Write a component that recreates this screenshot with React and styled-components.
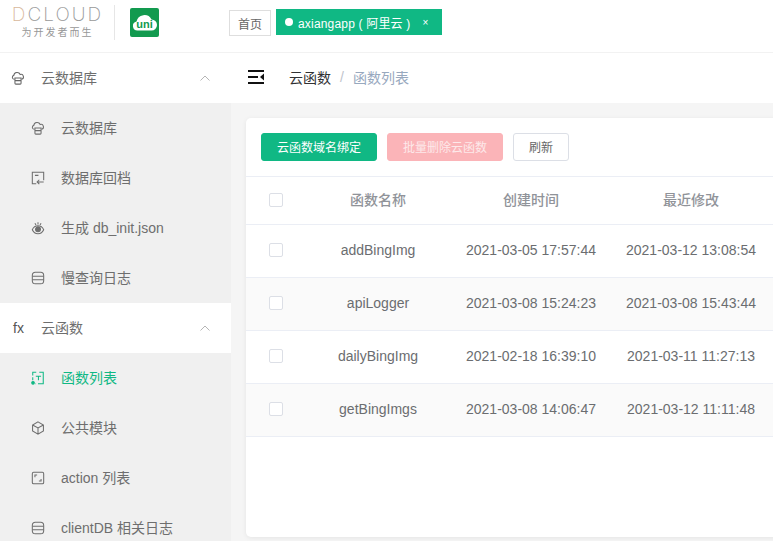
import React from "react";
import styled, { createGlobalStyle } from "styled-components";

const GlobalStyle = createGlobalStyle`
  html, body {
    margin: 0;
    height: 100%;
    overflow: hidden;
    background: #fff;
    font-family: "Liberation Sans", "Noto Sans CJK SC", sans-serif;
    font-size: 14px;
  }
  * { box-sizing: border-box; }
`;

const Page = styled.div`
  width: 773px;
  height: 541px;
  display: flex;
  flex-direction: column;
  overflow: hidden;
`;

const Header = styled.header`
  height: 53px;
  flex: none;
  display: flex;
  align-items: flex-start;
  background: #fff;
  border-bottom: 1px solid #f2f2f2;
`;

const Brand = styled.div`
  width: 229px;
  flex: none;
  display: flex;
  align-items: flex-start;
  padding: 5px 0 0 12px;
`;

const Wordmark = styled.div`
  width: 89px;
  display: flex;
  flex-direction: column;
  align-items: center;
`;

const WordmarkTitle = styled.div`
  font-family: Inter, "Liberation Sans", sans-serif;
  font-weight: 200;
  font-size: 19px;
  line-height: 19px;
  letter-spacing: 2px;
  margin-right: -2px;
  color: #999;
  white-space: nowrap;
`;

const WordmarkAccent = styled.span`
  color: #d8b89c;
`;

const Slogan = styled.div`
  font-size: 10px;
  line-height: 16px;
  margin-top: 1px;
  letter-spacing: 2px;
  margin-right: -2px;
  color: #979797;
  white-space: nowrap;
`;

const BrandDivider = styled.div`
  width: 1px;
  height: 35px;
  margin: 0 15px 0 13px;
  background: #e6e6e6;
`;

const UniLogo = styled.svg`
  margin-top: 3px;
`;

const Tabs = styled.nav`
  display: flex;
  align-items: flex-start;
  gap: 5px;
  padding-top: 9px;
`;

const HomeTab = styled.div`
  width: 42px;
  height: 26px;
  margin-top: 1px;
  display: flex;
  align-items: center;
  justify-content: center;
  border: 1px solid #dedede;
  font-size: 12px;
  color: #666;
`;

const ActiveTab = styled.div`
  width: 166px;
  height: 26px;
  display: flex;
  align-items: center;
  padding-left: 9px;
  background: #10b884;
  font-size: 12px;
  letter-spacing: 0.18px;
  color: #fff;
  white-space: pre;
`;

const TabDot = styled.span`
  width: 8px;
  height: 8px;
  margin-right: 5px;
  border-radius: 50%;
  background: #fff;
`;

const TabClose = styled.span`
  margin-left: 12px;
  font-size: 10px;
`;

const Body = styled.div`
  flex: 1;
  min-height: 0;
  display: flex;
`;

const Sidebar = styled.aside`
  width: 231px;
  flex: none;
  overflow: hidden;
  background: #f0f0f0;
`;

const GroupRow = styled.div`
  height: 50px;
  display: flex;
  align-items: center;
  padding-left: 11px;
  background: #fff;
  color: #6e6e6e;
`;

const GroupIcon = styled.span`
  width: 30px;
  flex: none;
  display: flex;
  align-items: center;
  color: #666;
`;

const FxMark = styled.span`
  margin-left: 2px;
  font-size: 14px;
  color: #555;
`;

const RowLabel = styled.span`
  padding-bottom: 2px;
`;

const Chevron = styled.svg`
  margin-left: auto;
  margin-right: 21px;
`;

const MenuRow = styled.div`
  height: 50px;
  display: flex;
  align-items: center;
  padding-left: 31px;
  white-space: nowrap;
  color: ${(p) => (p.$active ? "#10b884" : "#6e6e6e")};
`;

const MenuIcon = styled.span`
  width: 30px;
  flex: none;
  display: flex;
  align-items: center;
`;

const Main = styled.main`
  flex: 1;
  min-width: 0;
  display: flex;
  flex-direction: column;
  overflow: hidden;
  background: #f5f5f5;
`;

const Crumbs = styled.div`
  height: 50px;
  flex: none;
  display: flex;
  align-items: center;
  padding-left: 17px;
  background: #fff;
`;

const CollapseIcon = styled.svg`
  margin-bottom: 2px;
`;

const CrumbCurrent = styled.span`
  margin-left: 25px;
  padding-bottom: 2px;
  color: #303133;
`;

const CrumbSep = styled.span`
  margin: 0 9px;
  padding-bottom: 2px;
  color: #c0c4cc;
`;

const CrumbLeaf = styled.span`
  padding-bottom: 2px;
  color: #97a8be;
`;

const Content = styled.div`
  flex: 1;
  min-height: 0;
  padding: 15px 0 4px 15px;
`;

const Card = styled.section`
  width: 600px;
  height: 100%;
  background: #fff;
  border-radius: 5px;
  box-shadow: 0 1px 5px rgba(0, 0, 0, 0.07);
`;

const Toolbar = styled.div`
  height: 59px;
  display: flex;
  align-items: center;
  gap: 10px;
  padding: 0 0 1px 15px;
  border-bottom: 1px solid #ebeef5;
`;

const Button = styled.div`
  width: ${(p) => p.$width}px;
  height: 28px;
  display: flex;
  align-items: center;
  justify-content: center;
  border-radius: 3px;
  font-size: 12px;
  background: ${(p) => p.$bg};
  color: ${(p) => p.$color};
  border: 1px solid ${(p) => p.$border || p.$bg};
`;

const Row = styled.div`
  height: ${(p) => p.$height}px;
  padding-bottom: 2px;
  display: grid;
  grid-template-columns: 60px 144px 162px 158px;
  align-items: center;
  justify-items: center;
  border-bottom: 1px solid #ebeef5;
  background: ${(p) => (p.$striped ? "#fafafa" : "#fff")};
  color: #6b6d70;
  white-space: nowrap;
`;

const HeadCell = styled.div`
  padding-bottom: 2px;
  color: #909399;
  font-weight: 500;
`;

const Checkbox = styled.span`
  width: 14px;
  height: 14px;
  border: 1px solid #dcdfe6;
  border-radius: 2px;
  background: #fff;
`;

const Icon = ({ children }) => (
  <svg width="14" height="14" viewBox="0 0 16 16" fill="none" stroke="currentColor" strokeWidth="1.2">
    {children}
  </svg>
);

const CloudDbIcon = () => (
  <Icon>
    <path d="M4 9.500H3.600a2.300 2.300 0 0 1-.4-4.500 3.800 3.800 0 0 1 7.300-1A2.800 2.800 0 0 1 12.200 9.500H12" />
    <path d="M4.500 8h7v6a1 1 0 0 1-1 1h-5a1 1 0 0 1-1-1zM4.500 11h7" />
  </Icon>
);

const ArchiveIcon = () => (
  <Icon>
    <path d="M6 14.500H1.500v-13h13v9" />
    <path d="M14.500 12.500H7M9.500 10l-2.500 2.500 2.500 2.500M4.500 5h4" />
  </Icon>
);

const GenerateIcon = () => (
  <Icon>
    <circle cx="8" cy="9.500" r="2.800" fill="currentColor" />
    <path d="M1.500 10C3 6.500 5.500 5.500 8 5.500s5 1 6.500 4.500C13 13.500 10.500 14.500 8 14.500s-5-1-6.500-4.500zM8 1.500v2.500M4.500 2.500l1.200 2M11.500 2.500l-1.200 2" />
  </Icon>
);

const LogIcon = () => (
  <Icon>
    <rect x="1.500" y="1.500" width="13" height="13" rx="3.500" />
    <path d="M1.500 6h13M1.500 10h13" />
  </Icon>
);

const ListIcon = () => (
  <Icon>
    <path d="M2 5V1.500h4M9.500 1.500h4.500V14.500H8M5.500 14.500H5M2 7v3.500" />
    <path d="M5.500 6h6M8.500 6v4.500" />
    <circle cx="2.300" cy="13.500" r="1.500" fill="currentColor" />
  </Icon>
);

const CubeIcon = () => (
  <Icon>
    <path d="M8 1l6.200 3.500v7L8 15l-6.200-3.500v-7zM1.800 4.500L8 8l6.200-3.500M8 8v7" />
  </Icon>
);

const ActionIcon = () => (
  <Icon>
    <rect x="1.500" y="1.500" width="13" height="13" rx="1.500" />
    <path d="M4.500 7V4.500H7M9 11.500h2.500V9" />
  </Icon>
);

const DB_ITEMS = [
  { name: "云数据库", Glyph: CloudDbIcon },
  { name: "数据库回档", Glyph: ArchiveIcon },
  { name: "生成 db_init.json", Glyph: GenerateIcon },
  { name: "慢查询日志", Glyph: LogIcon },
];

const FN_ITEMS = [
  { name: "函数列表", Glyph: ListIcon, active: true },
  { name: "公共模块", Glyph: CubeIcon },
  { name: "action 列表", Glyph: ActionIcon },
  { name: "clientDB 相关日志", Glyph: LogIcon },
];

const FUNCTIONS = [
  { name: "addBingImg", created: "2021-03-05 17:57:44", updated: "2021-03-12 13:08:54" },
  { name: "apiLogger", created: "2021-03-08 15:24:23", updated: "2021-03-08 15:43:44" },
  { name: "dailyBingImg", created: "2021-02-18 16:39:10", updated: "2021-03-11 11:27:13" },
  { name: "getBingImgs", created: "2021-03-08 14:06:47", updated: "2021-03-12 11:11:48" },
];

const UpChevron = () => (
  <Chevron width="10" height="6" viewBox="0 0 10 6" fill="none" stroke="#b5b5b5" strokeWidth="1">
    <path d="M.5 5.500L5 1l4.500 4.500" />
  </Chevron>
);

const MenuList = ({ items }) =>
  items.map(({ name, Glyph, active }) => (
    <MenuRow key={name} $active={active}>
      <MenuIcon>
        <Glyph />
      </MenuIcon>
      <RowLabel>{name}</RowLabel>
    </MenuRow>
  ));

const App = () => (
  <Page>
    <GlobalStyle />
    <Header>
      <Brand>
        <Wordmark>
          <WordmarkTitle>
            <WordmarkAccent>D</WordmarkAccent>CLOUD
          </WordmarkTitle>
          <Slogan>为开发者而生</Slogan>
        </Wordmark>
        <BrandDivider />
        <UniLogo width="29" height="29" viewBox="0 0 29 29">
          <rect width="29" height="29" rx="2" fill="#129a4f" />
          <path
            d="M7.500 22.500a4.500 4.500 0 0 1-1-8.900A8 8 0 0 1 21.500 11.500a5.500 5.500 0 0 1 0 11z"
            fill="#fff"
          />
          <text x="14.500" y="19.500" textAnchor="middle" fontSize="11" fontWeight="700" fill="#129a4f" fontFamily="Liberation Sans">
            uni
          </text>
        </UniLogo>
      </Brand>
      <Tabs>
        <HomeTab>首页</HomeTab>
        <ActiveTab>
          <TabDot />
          axiangapp ( 阿里云 )
          <TabClose>×</TabClose>
        </ActiveTab>
      </Tabs>
    </Header>
    <Body>
      <Sidebar>
        <GroupRow>
          <GroupIcon>
            <CloudDbIcon />
          </GroupIcon>
          <RowLabel>云数据库</RowLabel>
          <UpChevron />
        </GroupRow>
        <MenuList items={DB_ITEMS} />
        <GroupRow>
          <GroupIcon>
            <FxMark>fx</FxMark>
          </GroupIcon>
          <RowLabel>云函数</RowLabel>
          <UpChevron />
        </GroupRow>
        <MenuList items={FN_ITEMS} />
      </Sidebar>
      <Main>
        <Crumbs>
          <CollapseIcon width="16" height="14" viewBox="0 0 16 14" fill="#111">
            <rect width="16" height="2" />
            <rect y="12" width="16" height="2" />
            <rect y="6" width="10" height="2" />
            <path d="M16 3.500v7L12 7z" />
          </CollapseIcon>
          <CrumbCurrent>云函数</CrumbCurrent>
          <CrumbSep>/</CrumbSep>
          <CrumbLeaf>函数列表</CrumbLeaf>
        </Crumbs>
        <Content>
          <Card>
            <Toolbar>
              <Button $width={116} $bg="#10b884" $color="#fff">云函数域名绑定</Button>
              <Button $width={116} $bg="#fbb4b8" $color="#fde9ea">批量删除云函数</Button>
              <Button $width={56} $bg="#fff" $color="#666" $border="#dcdfe6">刷新</Button>
            </Toolbar>
            <Row $height={48}>
              <Checkbox />
              <HeadCell>函数名称</HeadCell>
              <HeadCell>创建时间</HeadCell>
              <HeadCell>最近修改</HeadCell>
            </Row>
            {FUNCTIONS.map((fn, i) => (
              <Row key={fn.name} $height={53} $striped={i % 2 === 1}>
                <Checkbox />
                <span>{fn.name}</span>
                <span>{fn.created}</span>
                <span>{fn.updated}</span>
              </Row>
            ))}
          </Card>
        </Content>
      </Main>
    </Body>
  </Page>
);

export default App;
